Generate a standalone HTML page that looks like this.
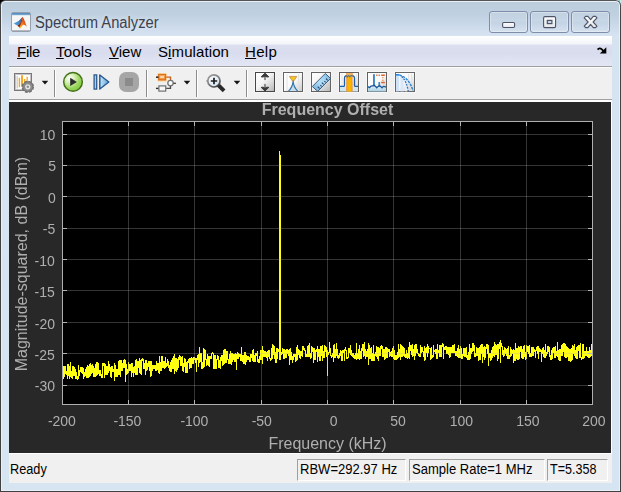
<!DOCTYPE html>
<html lang="en">
<head>
<meta charset="utf-8">
<title>Spectrum Analyzer</title>
<style>
*{box-sizing:border-box;}
html,body{margin:0;padding:0;}
body{width:621px;height:492px;overflow:hidden;position:relative;background:#000;
  font-family:"Liberation Sans",sans-serif;}
.abs{position:absolute;}
#corner-tr{position:absolute;left:616px;top:0;width:5px;height:5px;background:linear-gradient(to right,#ffffff 0,#fff6c8 35%,#5cc8d8 60%,#e8fbff 100%);}
#frame{position:absolute;left:0;top:0;width:621px;height:492px;background:linear-gradient(to bottom,#555 0,#444 12px,#404040 100%);border-radius:5.5px 5.5px 0 0;}
#frame-hi{position:absolute;left:1px;top:1px;width:619px;height:490px;background:#e9f0f8;border-radius:4.5px 4.5px 0 0;}
#frame-fill{position:absolute;left:2px;top:2px;width:617px;height:488px;border-radius:3.5px 3.5px 0 0;
  background:linear-gradient(to bottom,#bccddc 0px,#bfd0e0 12px,#cedcec 26px,#d6e3f1 34px,#d7e4f2 100%);}
#title{position:absolute;left:35px;top:12px;height:22px;line-height:22px;font-size:16px;color:#3b424e;white-space:nowrap;
  transform-origin:0 50%;transform:scaleX(0.921);text-shadow:0 0 5px rgba(255,255,255,.6);}
.cap{position:absolute;top:11px;height:22px;width:39px;border:1px solid #7f8dab;border-radius:3px;
  background:linear-gradient(to bottom,rgba(255,255,255,.05) 0,rgba(255,255,255,.02) 45%,rgba(120,150,190,.06) 50%,rgba(255,255,255,.06) 100%);
  box-shadow:inset 0 0 0 1px rgba(255,255,255,.32);}
#client{position:absolute;left:9px;top:36px;width:603px;height:447px;background:#f0f0f0;}
#menubar{position:absolute;left:0;top:0;width:603px;height:30px;
  background:linear-gradient(to bottom,#ffffff 0,#f3f5fa 8px,#dcdfef 9px,#d8dcee 17px,#e3e7f4 30px);}
.mi{position:absolute;top:5px;height:22px;line-height:22px;font-size:15px;color:#000;white-space:nowrap;}
.mi u{text-decoration:underline;text-underline-offset:1px;}
#tbtop{position:absolute;left:0;top:30px;width:603px;height:1px;background:#a0a0a0;}
#tbtop2{position:absolute;left:0;top:31px;width:603px;height:1px;background:#fcfcfc;}
#tbline{position:absolute;left:0;top:63px;width:603px;height:1px;background:#a0a0a0;}
#tbwhite{position:absolute;left:0;top:64px;width:603px;height:2px;background:#fff;}
#fig{position:absolute;left:0;top:66px;width:602px;height:351px;background:#282828;}
#figr{position:absolute;left:602px;top:66px;width:1px;height:351px;background:#fff;}
#figb{position:absolute;left:0;top:417px;width:603px;height:1px;background:#fff;}
#status{position:absolute;left:0;top:418px;width:603px;height:29px;background:#f0f0f0;font-size:14px;color:#000;}
.st{display:inline-block;transform-origin:0 50%;transform:scaleX(0.93);white-space:nowrap;}
.sb{position:absolute;top:5px;height:22px;line-height:19px;padding-left:2px;white-space:nowrap;
  border-top:1px solid #a0a0a0;border-left:1px solid #a0a0a0;border-right:1px solid #fff;border-bottom:1px solid #fff;}
svg{position:absolute;left:0;top:0;}
svg text{font-family:"Liberation Sans",sans-serif;}
#plot{will-change:transform;}
</style>
</head>
<body>
<div id="corner-tr"></div>
<div id="frame"></div><div id="frame-hi"></div><div id="frame-fill"></div>
<div id="title">Spectrum Analyzer</div>
<div class="cap" style="left:489px"></div>
<div class="cap" style="left:530px"></div>
<div class="cap" style="left:571px"></div>
<div id="client">
  <div id="menubar">
    <span class="mi" style="left:8px;letter-spacing:-0.3px"><u>F</u>ile</span>
    <span class="mi" style="left:47px;letter-spacing:0.2px"><u>T</u>ools</span>
    <span class="mi" style="left:100px"><u>V</u>iew</span>
    <span class="mi" style="left:149px;letter-spacing:0.1px">S<u>i</u>mulation</span>
    <span class="mi" style="left:236px;letter-spacing:0.3px"><u>H</u>elp</span>
  </div>
  <div id="tbtop"></div><div id="tbtop2"></div>
  <div id="tbline"></div><div id="tbwhite"></div>
  <div id="fig"></div><div id="figr"></div><div id="figb"></div>
  <div id="status">
    <span class="abs" style="left:1px;top:7px;line-height:16px;"><span class="st" style="transform:scaleX(0.91)">Ready</span></span>
    <span class="sb" style="left:288px;width:109px;"><span class="st">RBW=292.97 Hz</span></span>
    <span class="sb" style="left:400px;width:136px;"><span class="st">Sample Rate=1 MHz</span></span>
    <span class="sb" style="left:538px;width:61px;"><span class="st" style="transform:scaleX(0.897)">T=5.358</span></span>
  </div>
</div>
<svg id="chrome" width="621" height="492" viewBox="0 0 621 492">
  <defs>
    <linearGradient id="gBlueBar" x1="0" y1="0" x2="0" y2="1"><stop offset="0" stop-color="#4f86ba"/><stop offset="1" stop-color="#7fb0d8"/></linearGradient>
    <linearGradient id="gOr" x1="0.1" y1="1" x2="0.9" y2="0.1"><stop offset="0" stop-color="#fcc82a"/><stop offset=".3" stop-color="#f4901c"/><stop offset=".62" stop-color="#e0601a"/><stop offset="1" stop-color="#b42c1c"/></linearGradient>
    <linearGradient id="gBl" x1="0" y1="0.6" x2="1" y2="0.4"><stop offset="0" stop-color="#58a8e0"/><stop offset=".6" stop-color="#4488c4"/><stop offset="1" stop-color="#2c5c98"/></linearGradient>
    <radialGradient id="gPlay" cx="0.32" cy="0.3" r="0.85"><stop offset="0" stop-color="#ffffff"/><stop offset=".3" stop-color="#d8f0b8"/><stop offset=".65" stop-color="#97d45a"/><stop offset="1" stop-color="#7cc33c"/></radialGradient>
    <linearGradient id="gStep" x1="0" y1="0" x2="1" y2="0"><stop offset="0" stop-color="#c8e6fa"/><stop offset="1" stop-color="#5ea6dc"/></linearGradient>
    <linearGradient id="gBox" x1="0" y1="0" x2="1" y2="1"><stop offset="0" stop-color="#ffffff"/><stop offset=".5" stop-color="#fafafa"/><stop offset="1" stop-color="#c8c8c8"/></linearGradient>
    <linearGradient id="gBox2" x1="0" y1="0" x2="1" y2="1"><stop offset="0" stop-color="#ffffff"/><stop offset=".45" stop-color="#f4f4f4"/><stop offset="1" stop-color="#b4b4b4"/></linearGradient>
    <linearGradient id="gRuler" x1="0" y1="1" x2="1" y2="0"><stop offset="0" stop-color="#62a8dc"/><stop offset=".45" stop-color="#b4dcf6"/><stop offset=".7" stop-color="#a4d4f2"/><stop offset="1" stop-color="#5ea2d8"/></linearGradient>
    <linearGradient id="gRing" x1="0.2" y1="0" x2="0.8" y2="1"><stop offset="0" stop-color="#9a9a9a"/><stop offset=".55" stop-color="#7c7c7c"/><stop offset="1" stop-color="#3a3a3a"/></linearGradient>
    <linearGradient id="gLens" x1="0" y1="0" x2="1" y2="1"><stop offset="0" stop-color="#ffffff"/><stop offset="1" stop-color="#cfe2f0"/></linearGradient>
    <linearGradient id="gOB" x1="0" y1="0" x2="0" y2="1"><stop offset="0" stop-color="#f6a85a"/><stop offset="1" stop-color="#ec8428"/></linearGradient>
    <linearGradient id="gGlyph" x1="0" y1="0" x2="0" y2="1"><stop offset="0" stop-color="#ffffff"/><stop offset="1" stop-color="#e4e6ea"/></linearGradient>
    <linearGradient id="gSea" x1="0" y1="0" x2="0" y2="1"><stop offset="0" stop-color="#d6ecf6"/><stop offset="1" stop-color="#a8cfe2"/></linearGradient>
  </defs>
  <!-- title bar app icon -->
  <g id="appicon">
    <rect x="11.5" y="12.5" width="19" height="19" rx="1.5" fill="#f6f6f6" stroke="#96a0ac"/>
    <rect x="12" y="13" width="18" height="2.2" fill="url(#gBlueBar)"/>
    <path d="M12 30.5h18" stroke="#b4b8be" stroke-width="1"/>
    <path d="M13.6 23.4 L18.6 21 L22 17.6 L20.4 23.6 L17.6 25.8 Z" fill="url(#gBl)"/>
    <path d="M17.6 25.8 L20.2 23.4 L22.1 17.2 L22.6 17.4 L22 24.5 L19.6 27.8 Z" fill="#8a1a12"/>
    <path d="M22.4 17 C23.7 17.2 25 22 26.9 26.7 C25.2 25.2 24 24.2 22.6 25.2 C21.6 26.4 20.6 28.4 19.7 28.9 L19.1 27.6 C20.9 25.4 21.9 21 22.4 17 Z" fill="url(#gOr)"/>
  </g>
  <!-- caption glyphs -->
  <g id="capglyphs" stroke="#4d5468" stroke-width="1.1">
    <rect x="502.6" y="22.5" width="12" height="5" rx="1.2" fill="url(#gGlyph)"/>
    <rect x="543.6" y="16.6" width="12" height="11" rx="1.3" fill="url(#gGlyph)"/>
    <rect x="547.3" y="20.4" width="4.6" height="3.2" fill="#c5d5e6" stroke-width="1.2"/>
    <path d="M585.6 16.4 L587.9 16.4 L590.6 19.6 L593.3 16.4 L595.6 16.4 L597 17.9 L593.1 22 L597 26.1 L595.6 27.6 L593.3 27.6 L590.6 24.4 L587.9 27.6 L585.6 27.6 L584.2 26.1 L588.1 22 L584.2 17.9 Z" fill="url(#gGlyph)" stroke-linejoin="round"/>
  </g>
  <!-- menu dock arrow -->
  <g id="dock">
    <path d="M597.6 49.6 Q599.6 47.2 601.6 49.2 L603.6 51.2" fill="none" stroke="#000" stroke-width="1.7"/>
    <path d="M606.3 47.3 L606.3 53.6 L599.8 53.6 Z" fill="#000"/>
  </g>
  <g id="toolbar">
    <!-- separators -->
    <path d="M54.5 70V97 M146.5 70V97 M196.5 70V97 M246.5 70V97" stroke="#8c8c8c" stroke-width="1" shape-rendering="crispEdges"/>
    <path d="M55.5 70V97 M147.5 70V97 M197.5 70V97 M247.5 70V97" stroke="#ffffff" stroke-width="1" shape-rendering="crispEdges"/>
    <!-- dropdown arrows -->
    <path d="M41.7 80.7h6.6l-3.3 3.7z M183.7 80.7h6.6l-3.3 3.7z M233.7 80.7h6.6l-3.3 3.7z" fill="#161616" stroke="#ffffff" stroke-opacity=".55" stroke-width="1" paint-order="stroke"/>
    <!-- spectrum settings -->
    <rect x="14.5" y="73.5" width="17" height="17" fill="#ffffff" stroke="#787878"/>
    <rect x="15.5" y="74.5" width="15" height="15" fill="none" stroke="#c4c4c4"/>
    <path d="M17.2 76v12.6" stroke="#cfcfcf" stroke-width="1.4"/>
    <path d="M19.4 77.8v9.4 M24.6 79v8 M27.2 76.8v9" stroke="#f9a826" stroke-width="1.4"/>
    <path d="M22 75.2v11.6" stroke="#f9a826" stroke-width="2"/>
    <circle cx="27.8" cy="86.8" r="5.2" fill="#858585" stroke="#6c6c6c" stroke-width="2" stroke-dasharray="2.7 1.38"/>
    <circle cx="27.8" cy="86.8" r="5" fill="#8c8c8c" stroke="#747474" stroke-width=".8"/>
    <circle cx="27.8" cy="86.8" r="2.6" fill="#e6e6e6"/>
    <circle cx="27.8" cy="86.8" r="1.25" fill="#8e8e8e"/>
    <!-- play -->
    <circle cx="73" cy="81.9" r="9.3" fill="url(#gPlay)" stroke="#43721a" stroke-width="1.5"/>
    <path d="M70.2 77.8 L76.9 81.9 L70.2 86 Z" fill="#2c2c2c"/>
    <!-- step forward -->
    <rect x="94.1" y="74.9" width="2.6" height="14.2" fill="#9fd0f2" stroke="#2b5b90" stroke-width="1.3"/>
    <path d="M99.8 75 L108.8 82 L99.8 89 Z" fill="url(#gStep)" stroke="#2b5b90" stroke-width="1.5" stroke-linejoin="round"/>
    <!-- stop -->
    <rect x="119" y="72" width="20" height="20" rx="7" fill="#a6a6a6"/>
    <rect x="125" y="78" width="8" height="8" fill="#8b8b8b"/>
    <!-- block diagram -->
    <rect x="157" y="72.9" width="10.2" height="8.8" rx="1.8" fill="#fddca4"/>
    <rect x="158.6" y="74.4" width="7" height="5.6" fill="url(#gOB)" stroke="#d8701e" stroke-width="1.1"/>
    <rect x="160.2" y="76" width="3.8" height="2.2" fill="#fbd6aa"/>
    <path d="M156 77.2h2.4" stroke="#2e2e2e" stroke-width="1.6"/>
    <path d="M166.2 77.1h4.3v3.4" fill="none" stroke="#c8621e" stroke-width="1.4"/>
    <circle cx="170.5" cy="83.1" r="2.7" fill="#ffffff" stroke="#747474" stroke-width="1.3"/>
    <path d="M173.5 83.3h2.4" stroke="#3a3a3a" stroke-width="1.3"/>
    <rect x="158.9" y="85.9" width="6.8" height="5.2" fill="#f6f6f6" stroke="#707070" stroke-width="1.2"/>
    <path d="M156 88.4h2.4" stroke="#2e2e2e" stroke-width="1.4"/>
    <path d="M166.2 88.4h4.3v-2.6" fill="none" stroke="#4c4c4c" stroke-width="1.3"/>
    <!-- zoom -->
    <path d="M219.4 86.2 L222.7 89.5" stroke="#2a2a2a" stroke-width="3.9" stroke-linecap="square"/>
    <circle cx="213.9" cy="80.9" r="6.1" fill="url(#gLens)" stroke="url(#gRing)" stroke-width="1.7"/>
    <path d="M206.4 81h1.4" stroke="#8a8a8a" stroke-width="1.4"/>
    <path d="M210.8 81h6.4 M214 77.8v6.4" stroke="#1c1c1c" stroke-width="1.7"/>
    <!-- boxed icons -->
    <g id="halos" fill="none" stroke="#f6f6f6" stroke-width="1" shape-rendering="crispEdges">
      <rect x="254.5" y="71.5" width="21" height="21"/><rect x="282.5" y="71.5" width="21" height="21"/><rect x="310.5" y="71.5" width="21" height="21"/>
      <rect x="338.5" y="71.5" width="21" height="21"/><rect x="366.5" y="71.5" width="21" height="21"/><rect x="394.5" y="71.5" width="21" height="21"/>
    </g>
    <g id="boxes" shape-rendering="crispEdges">
      <rect x="255.5" y="72.5" width="19" height="19" fill="url(#gBox2)" stroke="#464646"/>
      <rect x="283.5" y="72.5" width="19" height="19" fill="url(#gBox)" stroke="#646464"/>
      <rect x="311.5" y="72.5" width="19" height="19" fill="url(#gBox2)" stroke="#646464"/>
      <rect x="339.5" y="72.5" width="19" height="19" fill="url(#gBox)" stroke="#606060"/>
      <rect x="367.5" y="72.5" width="19" height="19" fill="url(#gBox)" stroke="#606060"/>
      <rect x="395.5" y="72.5" width="19" height="19" fill="url(#gBox)" stroke="#686868"/>
    </g>
    <!-- autoscale arrows -->
    <path d="M265 77.4v1.8" stroke="#8a8a8a" stroke-width="2" stroke-linecap="round"/>
    <path d="M261.2 76.8 L265 73.2 L268.8 76.8 L267 77 L265 76.2 L263 77 Z" fill="#3a3a3a" stroke="#3a3a3a" stroke-width="1" stroke-linejoin="round"/>
    <path d="M265 84.8v1.8" stroke="#8a8a8a" stroke-width="2" stroke-linecap="round"/>
    <path d="M261.2 87.4 L265 91 L268.8 87.4 L267 87.2 L265 88 L263 87.2 Z" fill="#3a3a3a" stroke="#3a3a3a" stroke-width="1" stroke-linejoin="round"/>
    <!-- spectral mask / hourglass -->
    <path d="M287 74v17 M298.6 74v17" stroke="#e2e2e2" stroke-width="1"/>
    <path d="M289.4 76.4 L296.8 76.4 L294 80.8 L292.2 80.8 Z" fill="#f7c41e" stroke="#c08c48" stroke-width=".8"/>
    <path d="M292.6 80.4 h1 v1.4 h-1 z" fill="#8a7a3a"/>
    <path d="M292.5 82 L293.7 82 C294.2 86 295.4 88.6 297.6 91 L288.6 91 C290.8 88.6 292 86 292.5 82 Z" fill="#c4e0ee"/>
    <path d="M293.1 81.4 C292.7 85.6 291.4 88.4 288.6 91 M293.1 81.4 C293.5 85.6 294.8 88.4 297.6 91" fill="none" stroke="#3573ad" stroke-width="1.15"/>
    <!-- ruler -->
    <path d="M312.3 86.5 L325.4 73.4 L330.5 78.5 L317.7 91.3 Z" fill="url(#gRuler)" stroke="#3f5f7c" stroke-width="1" stroke-linejoin="round"/>
    <path d="M319.5 88.5l-1.8 -1.8M321.6 86.4l-1.2 -1.2M323.6 84.4l-1.8 -1.8M325.6 82.4l-1.2 -1.2M327.7 80.3l-1.8 -1.8" stroke="#2c4a66" stroke-width="1.1"/>
    <!-- channel measurements -->
    <path d="M342 74v12 M356.4 74v12" stroke="#e6e6e6" stroke-width="1.2"/>
    <rect x="340" y="86.6" width="18" height="4.9" fill="#d3e5ee"/>
    <path d="M340 86.4 H343.4 Q344.5 86.4 344.5 85.2 V78.2 Q344.5 76.2 346.2 75.7 L352.6 75.7 Q354.5 76.2 354.5 78.2 V85.2 Q354.5 86.4 355.6 86.4 H358" fill="none" stroke="#1c5fa6" stroke-width="1.35"/>
    <rect x="346.2" y="73" width="6.4" height="18.5" fill="#e8923c"/>
    <rect x="347.3" y="73" width="4.2" height="18.5" fill="#fcb400"/>
    <rect x="346.2" y="73" width="6.4" height="2.2" fill="#f4b070" opacity=".8"/>
    <path d="M346.2 75.7 L347.4 76.9 L348.6 75.5 L349.8 76.9 L351 75.5 L352.6 75.9" fill="none" stroke="#2a6aa8" stroke-width="1.1" opacity=".8"/>
    <!-- peak finder -->
    <rect x="368" y="86.8" width="18" height="4.7" fill="url(#gSea)"/>
    <rect x="373" y="74.2" width="1.9" height="12.4" fill="#3f86c6"/>
    <rect x="378.4" y="82" width="1.7" height="5" fill="#4a8cc8"/>
    <path d="M368 86.6 L369.4 87.6 L371 86.2 L372.6 86 L373.9 85 L375.4 86.2 L376.8 87.8 L378.2 86.4 L379.4 85.6 L380.6 86.6 L382 87.8 L383.4 86.4 L384.8 86.6 L386 87.2" fill="none" stroke="#1f5a9c" stroke-width="1.3"/>
    <path d="M376.2 75.2h1.2 M378.6 75.2h1.2 M381.2 75.2h3.6 M381.2 82.6h3.6" stroke="#d8602a" stroke-width="1.5"/>
    <path d="M382.9 77.6h0.01 M382.9 80.2h0.01" stroke="#e27a30" stroke-width="1.4" stroke-linecap="round"/>
    <!-- ccdf -->
    <rect x="396" y="74.6" width="3.2" height="16.8" fill="#cfe2f8"/>
    <rect x="400.4" y="76" width="3.2" height="15.4" fill="#d8e8fa"/>
    <rect x="404.8" y="79" width="2.6" height="12.4" fill="#e2eefb"/>
    <path d="M408.6 74v17 M411.6 74v17" stroke="#e4e4e4" stroke-width="1.2"/>
    <path d="M396 74.8 H399.4" stroke="#2a8ad8" stroke-width="1.7"/>
    <path d="M399.4 75 C405 76.6 410.2 81 413 91" fill="none" stroke="#2a8ad6" stroke-width="1.5" stroke-dasharray="2.6 1"/>
    <path d="M401.6 76.6 C405 79.6 407.2 84.6 408.2 91" fill="none" stroke="#3a70bc" stroke-width="1.3" stroke-dasharray="1.8 1.2"/>
</g>

</svg>
<svg id="plot" width="621" height="492" viewBox="0 0 621 492">
  <rect x="62" y="121" width="531" height="284" fill="#000"/>
  <path d="M63.5 366V379M64.5 366V377M65.5 366V374M66.5 371V375M67.5 364V379M68.5 364V376M69.5 366V379M70.5 362V377M71.5 371V378M72.5 366V379M73.5 366V376M74.5 367V376M75.5 369V379M76.5 372V379M77.5 376V380M78.5 365V379M79.5 370V376M80.5 367V372M81.5 367V373M82.5 367V374M83.5 368V379M84.5 372V377M85.5 369V376M86.5 367V378M87.5 365V378M88.5 366V378M89.5 364V377M90.5 363V376M91.5 365V374M92.5 364V373M93.5 366V377M94.5 368V377M95.5 364V377M96.5 362V376M97.5 362V375M98.5 363V374M99.5 370V376M100.5 370V376M101.5 374V378M102.5 363V378M103.5 363V366M104.5 363V378M105.5 364V375M106.5 366V375M107.5 366V375M108.5 361V373M109.5 364V371M110.5 367V377M111.5 366V378M112.5 366V372M113.5 369V372M114.5 363V381M115.5 365V377M116.5 369V377M117.5 369V377M118.5 361V375M119.5 360V375M120.5 360V377M121.5 360V371M122.5 363V371M123.5 360V368M124.5 359V368M125.5 360V382M126.5 364V375M127.5 369V374M128.5 362V373M129.5 364V371M130.5 364V371M131.5 363V377M132.5 363V373M133.5 367V377M134.5 366V373M135.5 360V375M136.5 359V375M137.5 361V375M138.5 361V368M139.5 358V373M140.5 360V374M141.5 359V375M142.5 358V361M143.5 359V369M144.5 363V369M145.5 360V375M146.5 360V371M147.5 363V370M148.5 361V367M149.5 361V371M150.5 361V377M151.5 361V376M152.5 365V371M153.5 365V369M154.5 365V369M155.5 365V371M156.5 361V371M157.5 363V370M158.5 363V373M159.5 356V374M160.5 362V371M161.5 356V371M162.5 356V368M163.5 361V368M164.5 361V369M165.5 357V368M166.5 363V367M167.5 359V366M168.5 361V368M169.5 365V371M170.5 362V372M171.5 360V372M172.5 358V369M173.5 356V369M174.5 354V374M175.5 358V371M176.5 358V372M177.5 359V370M178.5 357V368M179.5 355V360M180.5 356V366M181.5 357V366M182.5 356V371M183.5 363V372M184.5 358V367M185.5 359V373M186.5 362V373M187.5 361V373M188.5 359V363M189.5 358V369M190.5 358V368M191.5 357V368M192.5 358V364M193.5 357V364M194.5 357V360M195.5 358V363M196.5 358V372M197.5 355V360M198.5 354V367M199.5 347V363M200.5 353V362M201.5 353V369M202.5 362V369M203.5 348V368M204.5 349V367M205.5 350V360M206.5 359V366M207.5 354V365M208.5 356V366M209.5 356V367M210.5 356V359M211.5 353V359M212.5 352V354M213.5 353V369M214.5 355V369M215.5 355V369M216.5 359V369M217.5 355V360M218.5 356V368M219.5 360V368M220.5 357V369M221.5 355V361M222.5 355V366M223.5 350V365M224.5 349V364M225.5 349V363M226.5 351V363M227.5 351V360M228.5 359V364M229.5 354V364M230.5 351V364M231.5 353V365M232.5 353V362M233.5 354V360M234.5 354V362M235.5 353V362M236.5 354V370M237.5 352V359M238.5 353V359M239.5 354V357M240.5 354V361M241.5 347V361M242.5 355V362M243.5 355V364M244.5 352V364M245.5 352V365M246.5 355V362M247.5 356V360M248.5 356V360M249.5 357V362M250.5 354V362M251.5 354V358M252.5 350V361M253.5 349V362M254.5 355V362M255.5 353V362M256.5 353V356M257.5 351V362M258.5 359V363M259.5 356V363M260.5 350V360M261.5 350V360M262.5 346V364M263.5 350V357M264.5 351V357M265.5 351V357M266.5 352V358M267.5 351V361M268.5 350V357M269.5 350V359M270.5 358V361M271.5 348V360M272.5 344V359M273.5 345V355M274.5 346V359M275.5 352V363M276.5 348V363M277.5 348V359M278.5 349V352M279.5 346V352M280.5 346V358M281.5 352V355M282.5 348V354M283.5 349V359M284.5 349V359M285.5 350V358M286.5 349V358M287.5 349V354M288.5 350V356M289.5 349V365M290.5 348V360M291.5 352V360M292.5 356V363M293.5 354V360M294.5 354V357M295.5 354V362M296.5 347V361M297.5 345V360M298.5 349V355M299.5 350V358M300.5 351V359M301.5 351V356M302.5 346V357M303.5 346V350M304.5 348V351M305.5 350V357M306.5 354V357M307.5 346V357M308.5 345V357M309.5 343V357M310.5 353V359M311.5 346V358M312.5 347V352M313.5 348V363M314.5 348V360M315.5 350V360M316.5 349V352M317.5 346V362M318.5 349V357M319.5 349V361M320.5 346V361M321.5 346V356M322.5 345V361M323.5 351V358M324.5 345V358M325.5 346V352M326.5 347V357M327.5 351V356M328.5 352V355M329.5 342V353M330.5 348V356M331.5 355V358M332.5 353V357M333.5 345V362M334.5 344V358M335.5 349V358M336.5 343V356M337.5 349V358M338.5 355V359M339.5 353V358M340.5 350V356M341.5 351V361M342.5 350V361M343.5 350V353M344.5 349V361M345.5 347V351M346.5 350V359M347.5 357V359M348.5 348V358M349.5 348V353M350.5 345V355M351.5 350V356M352.5 353V357M353.5 353V358M354.5 355V359M355.5 353V359M356.5 343V360M357.5 353V359M358.5 349V359M359.5 345V360M360.5 351V359M361.5 348V359M362.5 344V351M363.5 344V357M364.5 342V356M365.5 349V359M366.5 351V357M367.5 349V357M368.5 343V365M369.5 345V359M370.5 348V359M371.5 347V361M372.5 353V361M373.5 345V361M374.5 354V361M375.5 352V356M376.5 346V357M377.5 347V359M378.5 347V361M379.5 348V356M380.5 346V356M381.5 345V349M382.5 346V357M383.5 349V357M384.5 349V360M385.5 347V359M386.5 347V358M387.5 348V358M388.5 349V352M389.5 349V357M390.5 352V356M391.5 351V357M392.5 348V357M393.5 346V359M394.5 350V360M395.5 355V360M396.5 355V360M397.5 352V359M398.5 344V358M399.5 349V357M400.5 344V360M401.5 345V357M402.5 346V357M403.5 347V356M404.5 348V357M405.5 354V358M406.5 350V358M407.5 353V359M408.5 347V358M409.5 342V359M410.5 345V351M411.5 345V355M412.5 344V357M413.5 349V356M414.5 345V360M415.5 344V356M416.5 344V353M417.5 349V354M418.5 353V356M419.5 354V357M420.5 345V357M421.5 347V353M422.5 347V352M423.5 351V357M424.5 346V361M425.5 348V360M426.5 347V353M427.5 344V357M428.5 346V353M429.5 348V349M430.5 348V360M431.5 347V359M432.5 355V358M433.5 345V357M434.5 350V352M435.5 349V354M436.5 349V359M437.5 344V359M438.5 350V353M439.5 345V357M440.5 345V357M441.5 345V357M442.5 343V347M443.5 344V359M444.5 347V350M445.5 346V350M446.5 346V354M447.5 347V354M448.5 347V355M449.5 347V358M450.5 347V357M451.5 347V353M452.5 345V353M453.5 345V353M454.5 344V353M455.5 351V356M456.5 351V356M457.5 348V357M458.5 345V358M459.5 349V358M460.5 346V358M461.5 348V359M462.5 354V359M463.5 348V356M464.5 348V357M465.5 348V357M466.5 347V358M467.5 355V360M468.5 352V360M469.5 344V360M470.5 348V359M471.5 348V354M472.5 343V352M473.5 343V351M474.5 345V357M475.5 353V357M476.5 347V356M477.5 348V356M478.5 348V361M479.5 347V360M480.5 345V360M481.5 344V354M482.5 344V363M483.5 347V357M484.5 346V360M485.5 347V358M486.5 344V349M487.5 344V354M488.5 345V366M489.5 353V358M490.5 353V361M491.5 350V360M492.5 347V358M493.5 346V356M494.5 342V357M495.5 344V355M496.5 345V355M497.5 344V361M498.5 344V359M499.5 342V349M500.5 340V363M501.5 343V347M502.5 346V355M503.5 350V357M504.5 347V356M505.5 348V354M506.5 349V356M507.5 348V359M508.5 346V359M509.5 355V359M510.5 347V357M511.5 349V356M512.5 350V354M513.5 349V363M514.5 350V361M515.5 343V361M516.5 348V359M517.5 348V360M518.5 346V360M519.5 347V359M520.5 346V352M521.5 346V358M522.5 349V359M523.5 346V359M524.5 345V357M525.5 352V360M526.5 345V359M527.5 346V352M528.5 346V354M529.5 345V357M530.5 353V357M531.5 347V357M532.5 347V356M533.5 347V356M534.5 349V352M535.5 350V358M536.5 347V351M537.5 346V354M538.5 346V359M539.5 348V352M540.5 349V352M541.5 350V362M542.5 348V354M543.5 347V357M544.5 350V358M545.5 344V358M546.5 352V356M547.5 346V354M548.5 346V352M549.5 347V357M550.5 355V360M551.5 350V360M552.5 348V359M553.5 347V353M554.5 347V358M555.5 346V358M556.5 351V356M557.5 342V357M558.5 350V360M559.5 349V361M560.5 349V361M561.5 345V356M562.5 344V356M563.5 343V352M564.5 343V357M565.5 344V358M566.5 346V358M567.5 347V357M568.5 348V361M569.5 349V361M570.5 349V362M571.5 348V361M572.5 345V360M573.5 346V354M574.5 344V356M575.5 350V358M576.5 347V359M577.5 346V359M578.5 345V351M579.5 345V358M580.5 343V358M581.5 357V360M582.5 344V359M583.5 344V359M584.5 351V358M585.5 351V356M586.5 347V356M587.5 351V357M588.5 351V358M589.5 347V358M590.5 350V357M591.5 344V356" stroke="#ffff11" stroke-width="1" fill="none" shape-rendering="crispEdges"/>
  <path d="M279.5 151V360 M280.5 155V360" stroke="#ffff11" stroke-width="1" fill="none" shape-rendering="crispEdges"/>
  <path d="M327.5 350V376" stroke="#ffff11" stroke-width="1" fill="none" shape-rendering="crispEdges"/>
  <path d="M128.5 122V404M194.5 122V404M261.5 122V404M327.5 122V404M393.5 122V404M460.5 122V404M526.5 122V404" stroke="rgba(175,175,175,0.30)" stroke-width="1" fill="none" shape-rendering="crispEdges"/>
  <path d="M63 134.5H592M63 165.5H592M63 196.5H592M63 228.5H592M63 259.5H592M63 290.5H592M63 322.5H592M63 353.5H592M63 385.5H592" stroke="rgba(175,175,175,0.30)" stroke-width="1" fill="none" shape-rendering="crispEdges"/>
  <path d="M128.5 121V126 M128.5 400V405M194.5 121V126 M194.5 400V405M261.5 121V126 M261.5 400V405M327.5 121V126 M327.5 400V405M393.5 121V126 M393.5 400V405M460.5 121V126 M460.5 400V405M526.5 121V126 M526.5 400V405M62 134.5H67 M588 134.5H593M62 165.5H67 M588 165.5H593M62 196.5H67 M588 196.5H593M62 228.5H67 M588 228.5H593M62 259.5H67 M588 259.5H593M62 290.5H67 M588 290.5H593M62 322.5H67 M588 322.5H593M62 353.5H67 M588 353.5H593M62 385.5H67 M588 385.5H593" stroke="#b4b4b4" stroke-width="1" fill="none" shape-rendering="crispEdges"/>
  <rect x="62.5" y="121.5" width="530" height="283" fill="none" stroke="#afafaf" stroke-width="1" shape-rendering="crispEdges"/>
  <g font-size="14" fill="#afafaf"><text x="61.9" y="426.3" text-anchor="middle">-200</text><text x="127.4" y="426.3" text-anchor="middle">-150</text><text x="194.4" y="426.3" text-anchor="middle">-100</text><text x="261.8" y="426.3" text-anchor="middle">-50</text><text x="333.6" y="426.3" text-anchor="middle">0</text><text x="398.0" y="426.3" text-anchor="middle">50</text><text x="461.4" y="426.3" text-anchor="middle">100</text><text x="527.9" y="426.3" text-anchor="middle">150</text><text x="593.9" y="426.3" text-anchor="middle">200</text><text x="55.3" y="140.2" text-anchor="end">10</text><text x="56.0" y="171.2" text-anchor="end">5</text><text x="55.7" y="203.2" text-anchor="end">0</text><text x="55.3" y="234.2" text-anchor="end">-5</text><text x="54.8" y="266.2" text-anchor="end">-10</text><text x="54.8" y="297.2" text-anchor="end">-15</text><text x="55.0" y="328.6" text-anchor="end">-20</text><text x="54.8" y="360.2" text-anchor="end">-25</text><text x="55.0" y="390.8" text-anchor="end">-30</text></g>
  <text x="327.5" y="115.3" text-anchor="middle" font-size="16" font-weight="bold" fill="#afafaf">Frequency Offset</text>
  <text x="327.5" y="448.6" text-anchor="middle" font-size="16" fill="#afafaf">Frequency (kHz)</text>
  <text transform="translate(26.6,264.1) rotate(-90)" text-anchor="middle" font-size="16" fill="#afafaf">Magnitude-squared, dB (dBm)</text>
</svg>
</body>
</html>
